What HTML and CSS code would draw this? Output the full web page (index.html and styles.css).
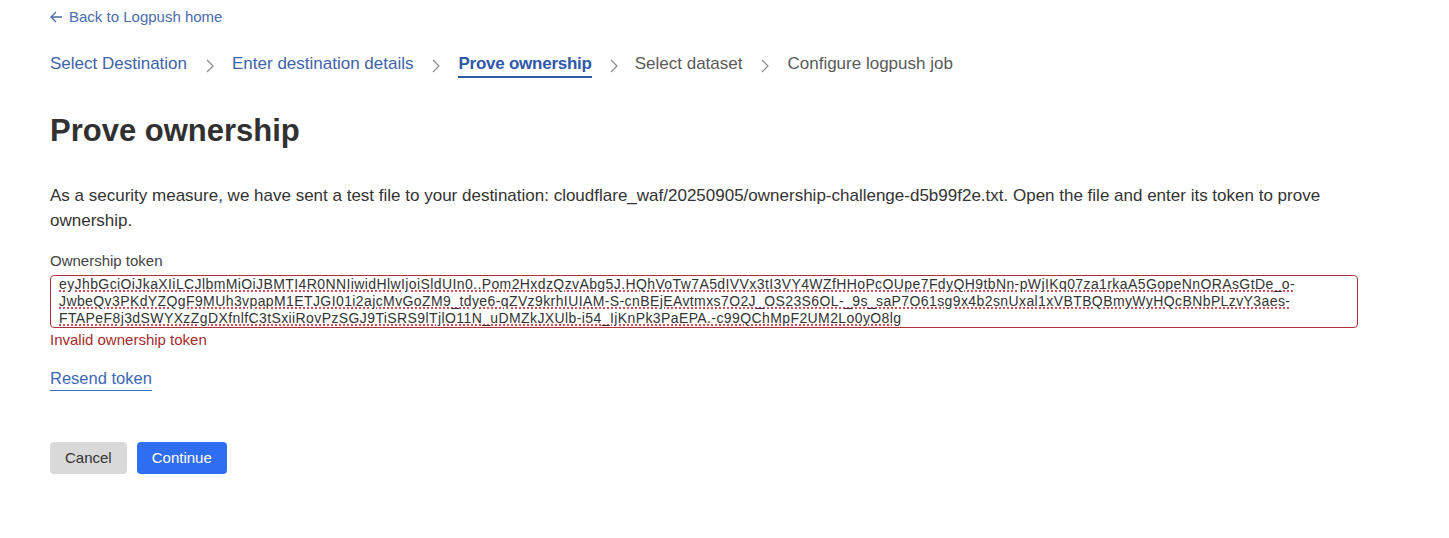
FILE: index.html
```html
<!DOCTYPE html>
<html lang="en">
<head>
    <meta charset="UTF-8">
    <meta name="viewport" content="width=device-width, initial-scale=1.0">
    <title>Prove ownership</title>
    <link rel="stylesheet" href="styles.css">
</head>
<body>
    <div class="page">
        <a class="back-link" href="#">
            <svg width="13" height="12" viewBox="0 0 13 12"><path d="M12 6H1.5M6 1L1 6l5 5" fill="none" stroke="currentColor" stroke-width="1.3"/></svg>
            Back to Logpush home
        </a>

        <nav class="steps">
            <a class="step done" href="#">Select Destination</a>
            <span class="sep"><svg width="10" height="16" viewBox="0 0 10 16"><path d="M2 2l6 6-6 6" fill="none" stroke="currentColor" stroke-width="1.2"/></svg></span>
            <a class="step done" href="#">Enter destination details</a>
            <span class="sep"><svg width="10" height="16" viewBox="0 0 10 16"><path d="M2 2l6 6-6 6" fill="none" stroke="currentColor" stroke-width="1.2"/></svg></span>
            <span class="step current">Prove ownership</span>
            <span class="sep"><svg width="10" height="16" viewBox="0 0 10 16"><path d="M2 2l6 6-6 6" fill="none" stroke="currentColor" stroke-width="1.2"/></svg></span>
            <span class="step">Select dataset</span>
            <span class="sep"><svg width="10" height="16" viewBox="0 0 10 16"><path d="M2 2l6 6-6 6" fill="none" stroke="currentColor" stroke-width="1.2"/></svg></span>
            <span class="step">Configure logpush job</span>
        </nav>

        <h1>Prove ownership</h1>

        <p class="intro">As a security measure, we have sent a test file to your destination: cloudflare_waf/20250905/ownership-challenge-d5b99f2e.txt. Open the file and enter its token to prove ownership.</p>

        <div class="field">
            <label class="field-label">Ownership token</label>
            <div class="token-input">
                <span>eyJhbGciOiJkaXIiLCJlbmMiOiJBMTI4R0NNIiwidHlwIjoiSldUIn0..Pom2HxdzQzvAbg5J.HQhVoTw7A5dIVVx3tI3VY4WZfHHoPcOUpe7FdyQH9tbNn-pWjIKq07za1rkaA5GopeNnORAsGtDe_o-</span><br>
                <span>JwbeQv3PKdYZQgF9MUh3vpapM1ETJGI01i2ajcMvGoZM9_tdye6-qZVz9krhIUIAM-S-cnBEjEAvtmxs7O2J_OS23S6OL-_9s_saP7O61sg9x4b2snUxal1xVBTBQBmyWyHQcBNbPLzvY3aes-</span><br>
                <span>FTAPeF8j3dSWYXzZgDXfnlfC3tSxiiRovPzSGJ9TiSRS9lTjlO11N_uDMZkJXUlb-i54_IjKnPk3PaEPA.-c99QChMpF2UM2Lo0yO8lg</span>
            </div>
            <div class="field-error">Invalid ownership token</div>
        </div>

        <a class="resend" href="#">Resend token</a>

        <div class="actions">
            <button class="btn btn-secondary">Cancel</button>
            <button class="btn btn-primary">Continue</button>
        </div>
    </div>
</body>
</html>
```

FILE: styles.css
```css
body {
    margin: 0;
    background: #ffffff;
    font-family: "Liberation Sans", Arial, sans-serif;
    color: #333333;
}
.page {
    padding: 8px 91px 40px 50px;
}
a {
    text-decoration: none;
}
.back-link {
    display: inline-flex;
    align-items: center;
    gap: 6px;
    font-size: 15px;
    color: #4a6cb0;
}
.steps {
    display: flex;
    align-items: center;
    margin-top: 27px;
    font-size: 17px;
}
.step {
    color: #5a5a5a;
    padding-bottom: 2px;
    border-bottom: 2px solid transparent;
}
.step.done {
    color: #3e63aa;
}
.step.current {
    color: #2f58a8;
    font-weight: bold;
    letter-spacing: -0.25px;
    border-bottom-color: #2f58a8;
}
.sep {
    display: flex;
    color: #8a8a8a;
    margin: 0 17px 0 18px;
}
.current + .sep {
    margin: 0 16px 0 17px;
}
h1 {
    margin: 35px 0 0;
    font-size: 31px;
    line-height: 36px;
    font-weight: bold;
    color: #313131;
}
.intro {
    margin: 34px 0 0;
    font-size: 17px;
    line-height: 25px;
    color: #333333;
}
.field {
    margin-top: 19px;
}
.field-label {
    display: block;
    font-size: 15px;
    line-height: 17px;
    color: #444444;
    margin-bottom: 6px;
}
.token-input {
    box-sizing: border-box;
    border: 1px solid #b0303a;
    border-radius: 4px;
    padding: 0 8px;
    height: 53px;
    font-size: 14px;
    line-height: 17px;
    letter-spacing: 0.4px;
    color: #333333;
    white-space: nowrap;
    overflow: hidden;
}
.token-input span {
    text-decoration-line: underline;
    text-decoration-style: dotted;
    text-decoration-color: #d0505e;
    text-decoration-thickness: 1.5px;
    text-underline-offset: 2px;
}
.field-error {
    margin-top: 3px;
    font-size: 15px;
    line-height: 17px;
    color: #a82a2a;
}
.resend {
    display: inline-block;
    margin-top: 21px;
    font-size: 16.5px;
    line-height: 19px;
    color: #3d68b8;
    border-bottom: 1px solid #3d68b8;
    padding-bottom: 2px;
}
.actions {
    display: flex;
    gap: 10px;
    margin-top: 51px;
}
.btn {
    height: 32px;
    border: none;
    border-radius: 4px;
    padding: 0 15px;
    font-family: "Liberation Sans", Arial, sans-serif;
    font-size: 15px;
    cursor: pointer;
}
.btn-secondary {
    background: #d9d9d9;
    color: #333333;
}
.btn-primary {
    background: #2f6ef0;
    color: #ffffff;
}
```
